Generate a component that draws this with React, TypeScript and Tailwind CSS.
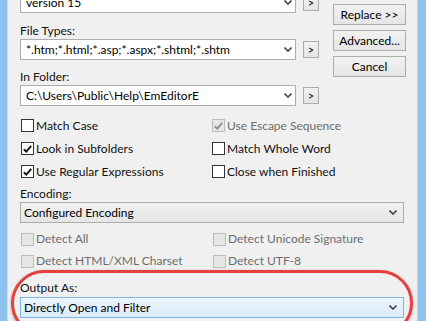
import React from "react";

const Chevron = () => (
  <svg width="8" height="5" viewBox="0 0 8 5" className="shrink-0">
    <path d="M0.5 0.5 L4 4 L7.5 0.5" fill="none" stroke="#444" strokeWidth="1.6" />
  </svg>
);

const Combo = ({ value, className = "" }: { value: string; className?: string }) => (
  <div className={`h-[21px] bg-white border border-[#abadb3] flex items-center pl-[5px] pr-[3px] ${className}`}>
    <span className="flex-1 truncate text-black">{value}</span>
    <Chevron />
  </div>
);

const DropList = ({ value, active = false }: { value: string; active?: boolean }) => (
  <div
    className={`h-[21px] w-[384px] border flex items-center pl-[3px] pr-[6px] ${
      active
        ? "border-[#7eb4ea] bg-gradient-to-b from-[#ecf4fc] to-[#dcecfc]"
        : "border-[#acacac] bg-gradient-to-b from-[#f2f2f2] to-[#e5e5e5]"
    }`}
  >
    <span className="flex-1 text-black">{value}</span>
    <Chevron />
  </div>
);

const SmallBtn = () => (
  <div className="ml-[7px] w-[16px] h-[17px] border border-[#acacac] bg-gradient-to-b from-[#f2f2f2] to-[#e5e5e5] flex items-center justify-center text-[11px] leading-none text-black">
    &gt;
  </div>
);

const Button = ({ label }: { label: string }) => (
  <div className="h-[21px] w-[73px] border border-[#acacac] bg-gradient-to-b from-[#f2f2f2] to-[#e5e5e5] flex items-center justify-center text-black">
    {label}
  </div>
);

const Check = ({ label, checked = false, disabled = false }: { label: string; checked?: boolean; disabled?: boolean }) => (
  <div className="flex items-center gap-[2px]">
    <div
      className={`w-[13px] h-[13px] border flex items-center justify-center ${
        disabled ? "border-[#bcbcbc] bg-[#e6e6e6]" : "border-[#333] bg-white"
      }`}
    >
      {checked && (
        <svg width="9" height="8" viewBox="0 0 9 8">
          <path
            d="M0.8 4.2 L3.3 6.6 L8.2 0.8"
            fill="none"
            stroke={disabled ? "#8d8d8d" : "#111"}
            strokeWidth="1.9"
          />
        </svg>
      )}
    </div>
    <span className={disabled ? "text-[#6d6d6d]" : "text-[#111]"}>{label}</span>
  </div>
);

const Label = ({ text, className = "" }: { text: string; className?: string }) => (
  <div className={`h-[14px] leading-[14px] text-[#111] ${className}`}>{text}</div>
);

export default function App() {
  return (
    <div
      className="relative w-[426px] h-[321px] overflow-hidden flex bg-[#f0f0f0] text-[12px] leading-[14px]"
      style={{ fontFamily: "Lato, 'Liberation Sans', sans-serif" }}
    >
      {/* window frame left */}
      <div className="w-[8px] shrink-0 bg-[#8ec3f0] border-r border-[#c8def4]" />

      <div className="w-[409px] shrink-0 pl-[12px]">
        <div className="flex">
          <div className="w-[299px] flex flex-col">
            <div className="flex items-center -mt-[8px]">
              <Combo value="version 15" className="w-[276px]" />
              <SmallBtn />
            </div>
            <Label text="File Types:" className="mt-[11px]" />
            <div className="flex items-center mt-[1px]">
              <Combo value="*.htm;*.html;*.asp;*.aspx;*.shtml;*.shtm" className="w-[276px]" />
              <SmallBtn />
            </div>
            <Label text="In Folder:" className="mt-[10px]" />
            <div className="flex items-center mt-[1px]">
              <Combo value="C:\Users\Public\Help\EmEditorE" className="w-[276px]" />
              <SmallBtn />
            </div>
          </div>
          <div className="ml-[14px] mt-[4px] flex flex-col gap-[5px]">
            <Button label="Replace >>" />
            <Button label="Advanced..." />
            <Button label="Cancel" />
          </div>
        </div>

        <div className="mt-[8px] grid grid-cols-[191px_1fr] pl-[1px]">
          <div className="h-[23px] flex items-center"><Check label="Match Case" /></div>
          <div className="h-[23px] flex items-center"><Check label="Use Escape Sequence" checked disabled /></div>
          <div className="h-[23px] flex items-center"><Check label="Look in Subfolders" checked /></div>
          <div className="h-[23px] flex items-center"><Check label="Match Whole Word" /></div>
          <div className="h-[23px] flex items-center"><Check label="Use Regular Expressions" checked /></div>
          <div className="h-[23px] flex items-center"><Check label="Close when Finished" /></div>
        </div>

        <Label text="Encoding:" className="mt-[4px]" />
        <div className="mt-[1px]">
          <DropList value="Configured Encoding" />
        </div>

        <div className="mt-[5px] grid grid-cols-[192px_1fr] pl-[1px]">
          <div className="h-[22px] flex items-center"><Check label="Detect All" disabled /></div>
          <div className="h-[22px] flex items-center"><Check label="Detect Unicode Signature" disabled /></div>
          <div className="h-[22px] flex items-center"><Check label="Detect HTML/XML Charset" disabled /></div>
          <div className="h-[22px] flex items-center"><Check label="Detect UTF-8" disabled /></div>
        </div>

        <Label text="Output As:" className="mt-[9px]" />
        <div className="mt-[2px]">
          <DropList value="Directly Open and Filter" active />
        </div>
      </div>

      {/* window frame right */}
      <div className="flex-1 bg-[#8ec3f0] border-l border-[#b6d6f4]" />

      {/* red annotation ring */}
      <div className="absolute left-[11px] top-[270px] w-[402px] h-[66px] rounded-full border-[3px] border-[#e4403d] shadow-[0_1px_3px_rgba(0,0,0,0.35)]" />
    </div>
  );
}
